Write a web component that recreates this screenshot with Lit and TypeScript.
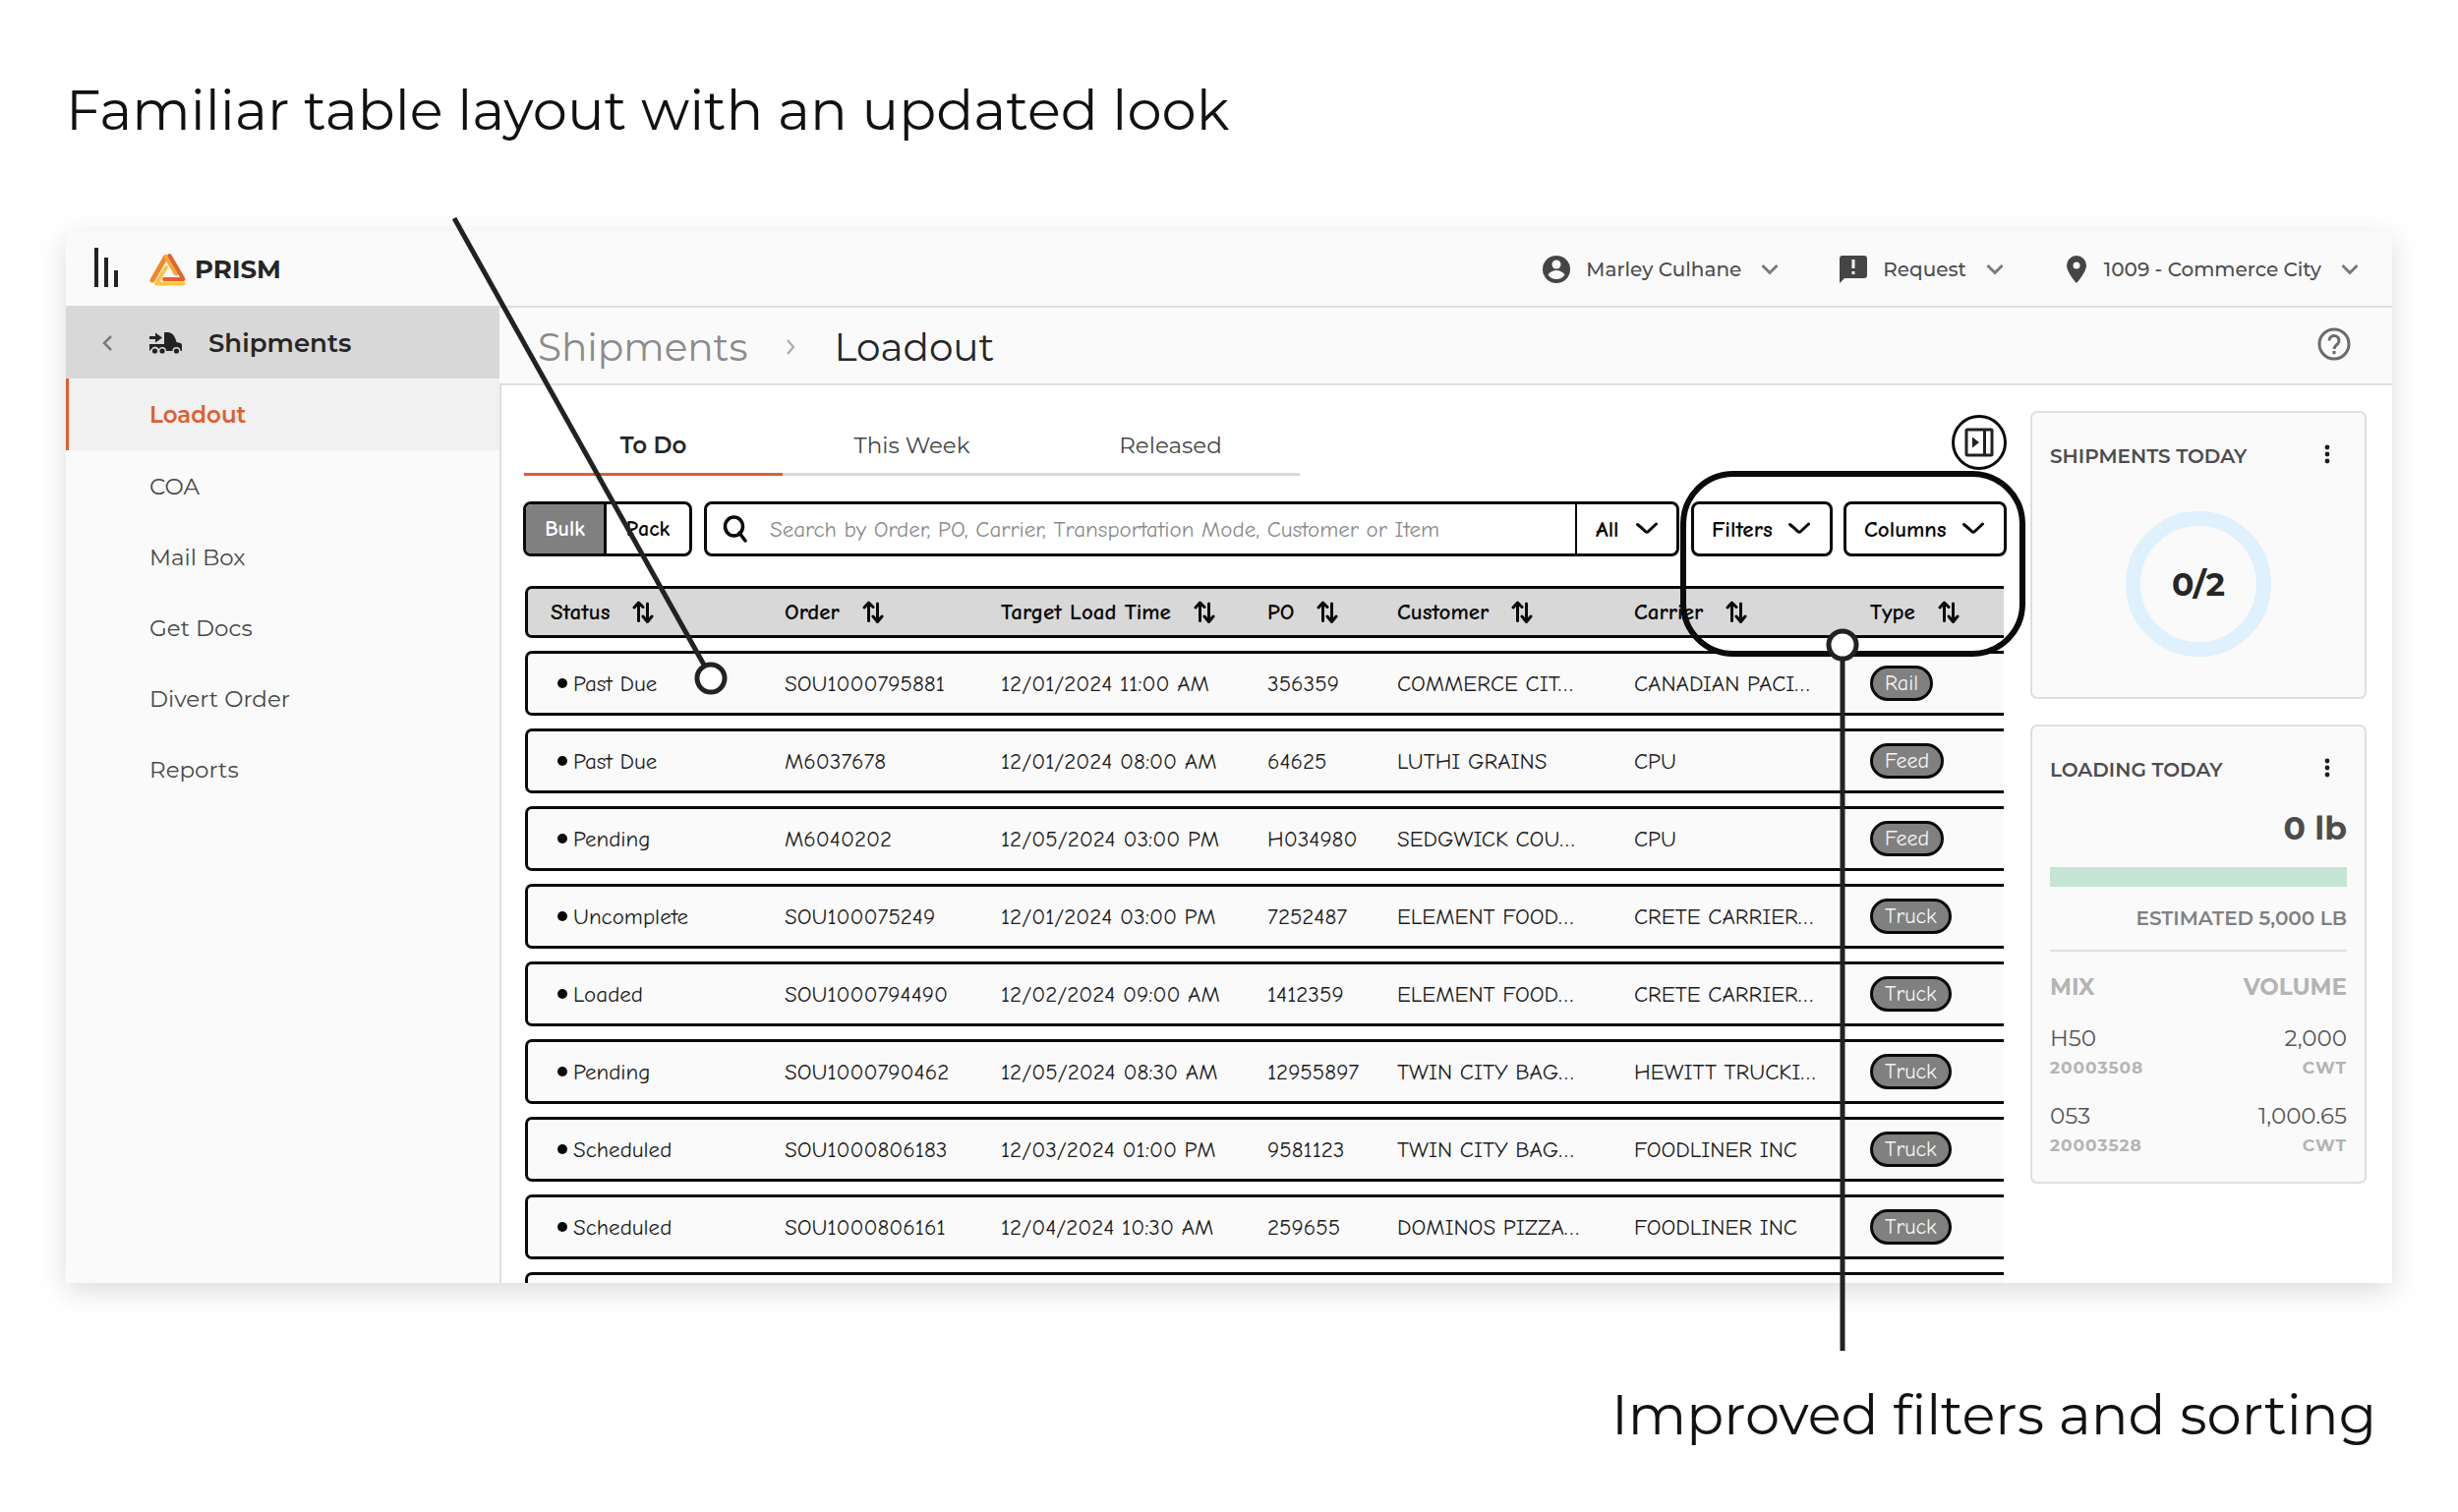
import { LitElement, html, css } from "lit";
import { customElement } from "lit/decorators.js";

const COLUMNS = [
  { label: "Status", width: 264 },
  { label: "Order", width: 220 },
  { label: "Target Load Time", width: 271 },
  { label: "PO", width: 132 },
  { label: "Customer", width: 241 },
  { label: "Carrier", width: 240 },
  { label: "Type", width: 136 },
];

const ROWS = [
  ["Past Due", "SOU1000795881", "12/01/2024 11:00 AM", "356359", "COMMERCE CIT…", "CANADIAN PACI…", "Rail"],
  ["Past Due", "M6037678", "12/01/2024 08:00 AM", "64625", "LUTHI GRAINS", "CPU", "Feed"],
  ["Pending", "M6040202", "12/05/2024 03:00 PM", "H034980", "SEDGWICK COU…", "CPU", "Feed"],
  ["Uncomplete", "SOU100075249", "12/01/2024 03:00 PM", "7252487", "ELEMENT FOOD…", "CRETE CARRIER…", "Truck"],
  ["Loaded", "SOU1000794490", "12/02/2024 09:00 AM", "1412359", "ELEMENT FOOD…", "CRETE CARRIER…", "Truck"],
  ["Pending", "SOU1000790462", "12/05/2024 08:30 AM", "12955897", "TWIN CITY BAG…", "HEWITT TRUCKI…", "Truck"],
  ["Scheduled", "SOU1000806183", "12/03/2024 01:00 PM", "9581123", "TWIN CITY BAG…", "FOODLINER INC", "Truck"],
  ["Scheduled", "SOU1000806161", "12/04/2024 10:30 AM", "259655", "DOMINOS PIZZA…", "FOODLINER INC", "Truck"],
];

const MIX = [
  { name: "H50", code: "20003508", volume: "2,000" },
  { name: "053", code: "20003528", volume: "1,000.65" },
];

const NAV = ["Loadout", "COA", "Mail Box", "Get Docs", "Divert Order", "Reports"];

const chevron = html`<svg class="chev" width="18" height="12" viewBox="0 0 18 12" aria-hidden="true">
  <path d="M1.500 2l7.500 7.500L16.500 2" /></svg>`;
const boldChevron = html`<svg class="chev bold" width="24" height="14" viewBox="0 0 24 14" aria-hidden="true">
  <path d="M2.500 2.500C5 4.500 8 7 10.500 9.500Q12 11 13.500 9.500C16 7 19 4.500 21.500 2" /></svg>`;
const sortIcon = html`<svg class="sort" width="22" height="24" viewBox="0 0 22 24" aria-hidden="true">
  <path d="M6.500 20.500V2.500M2 7L6.500 2l4.500 4.500M15.500 3v18M11 16l4.500 5.500L20 16" /></svg>`;
const kebab = html`<svg width="6" height="20" viewBox="0 0 6 20" aria-hidden="true">
  <circle cx="3" cy="3" r="2.400" /><circle cx="3" cy="10" r="2.400" /><circle cx="3" cy="17" r="2.400" /></svg>`;

@customElement("app-root")
export class AppRoot extends LitElement {
  static styles = css`
    :host {
      display: block;
      --sans: Montserrat, Inter, "Open Sans", sans-serif;
      --hand: "Comic Neue", Lato, "Open Sans", sans-serif;
      font-family: var(--sans);
      color: #262626;
      background: #fff;
    }
    * { box-sizing: border-box; }
    button, input, select { font: inherit; color: inherit; margin: 0; padding: 0; border: 0; background: none; }
    a { color: inherit; text-decoration: none; }
    .stage { display: flex; flex-direction: column; padding: 72px 67px; min-height: 100vh; }
    .caption { margin: 0; font-size: 56px; line-height: 80px; font-weight: 400; color: #111; }
    .caption.end { text-align: right; padding-right: 16px; margin-top: 94px; }
    .panel { position: relative; margin-top: 83px; background: #fff; box-shadow: 0 8px 28px rgba(0, 0, 0, 0.14); }

    .topbar { display: flex; align-items: center; height: 76px; background: #fafafa; padding: 1px 34px 0 29px; }
    .brand { display: flex; align-items: center; gap: 8px; margin-left: 31px; font-size: 26px; font-weight: 700; }
    .spacer { flex: 1; }
    .account { display: flex; align-items: center; font-size: 20px; font-weight: 500; color: #4d4d4d; margin-left: 62px; }
    .account .label { margin: 0 20px 0 16px; }
    .chev { fill: none; stroke: #7a7a7a; stroke-width: 3; }
    .chev.bold { stroke: #0a0a0a; stroke-width: 3; stroke-linecap: round; stroke-linejoin: round; }

    .body { display: grid; grid-template-columns: 441px 1fr; }
    .side { background: #fafafa; }
    .side-title { display: flex; align-items: center; width: 100%; height: 74px; padding: 1px 0 0 36px; background: #d8d8d8; font-size: 26px; font-weight: 600; }
    .side-title .truck { margin: 0 27px 0 37px; }
    .nav { display: flex; flex-direction: column; }
    .nav a { height: 72px; line-height: 74px; padding-left: 85px; font-size: 23px; color: #484848; }
    .nav a.on { height: 73px; padding-left: 82px; border-left: 3px solid #dd5f35; background: #f1f1f1; color: #dd5f35; font-weight: 600; }

    .crumbs { display: flex; align-items: center; height: 81px; padding: 2px 42px 0 39px; background: #fafafa; border-top: 2px solid #dfdfdf; border-bottom: 2px solid #dfdfdf; font-size: 39px; }
    .crumbs .parent { color: #8b8b8b; }
    .crumbs .sep { margin: 0 39px; }
    .content { display: grid; grid-template-columns: 1fr 342px; gap: 24px; padding: 0 26px 0 22px; border-left: 2px solid #dfdfdf; height: 913px; overflow: hidden; }
    .main { padding-top: 30px; min-width: 0; }
    .tab-row { display: flex; justify-content: space-between; align-items: flex-start; padding-left: 1px; }
    .tabs { display: grid; grid-template-columns: repeat(3, 263px); }
    .tab { height: 62px; padding-top: 2px; font-size: 23px; border-bottom: 3px solid #d8d8d8; color: #484848; }
    .tab.on { border-color: #dd5f35; color: #262626; font-weight: 600; }
    .round { display: grid; place-items: center; width: 56px; height: 56px; border: 3px solid #0a0a0a; border-radius: 50%; }

    .controls { display: flex; gap: 12px; height: 56px; margin-top: 26px; font-family: var(--hand); font-size: 23px; font-weight: 700; color: #0a0a0a; }
    .box { display: flex; border: 3px solid #0a0a0a; border-radius: 8px; background: #fff; }
    .toggle { width: 172px; overflow: hidden; font-size: 22px; }
    .toggle button { flex: 1; }
    .toggle .on { flex: none; width: 82px; background: #808080; color: #fff; border-right: 3px solid #0a0a0a; }
    .search { flex: 1; align-items: center; }
    .search .glass { margin: 0 22px 0 16px; }
    .search input { flex: 1; height: 100%; min-width: 0; font-weight: 400; outline: 0; }
    .search input::placeholder { color: #8b8b8b; opacity: 1; }
    .scope { position: relative; display: flex; align-items: center; width: 103px; height: 100%; border-left: 2px solid #0a0a0a; }
    .scope select { appearance: none; width: 100%; height: 100%; padding-left: 19px; }
    .scope .chev { position: absolute; right: 18px; pointer-events: none; }
    .filters { position: relative; display: flex; gap: 11px; }
    .filters .box { align-items: center; justify-content: space-between; padding: 0 19px 0 18px; }
    .filters .filter { width: 144px; }
    .filters .columns { width: 166px; }

    .table-wrap { margin-top: 17px; padding: 0 3px 0 2px; }
    .orders { width: 100%; table-layout: fixed; border-collapse: separate; border-spacing: 0 13px; font-family: var(--hand); font-size: 23px; font-weight: 400; text-align: left; color: #1c1c1c; }
    .orders th, .orders td { padding: 0; border: 3px solid #0a0a0a; border-width: 3px 0; white-space: nowrap; }
    .orders th { height: 53px; background: #d8d8d8; }
    .orders td { height: 66px; background: #fafafa; }
    .orders th:first-child, .orders td:first-child { border-left-width: 3px; border-radius: 7px 0 0 7px; padding-left: 23px; }
    .sorter { display: flex; align-items: center; gap: 23px; font-weight: 700; color: #0a0a0a; }
    .sort { fill: none; stroke: #0a0a0a; stroke-width: 3; stroke-linecap: round; stroke-linejoin: round; }
    .status { display: flex; align-items: center; gap: 6px; padding-left: 7px; }
    .dot { width: 10px; height: 10px; border-radius: 50%; background: #0a0a0a; }
    .chip { display: inline-flex; align-items: center; vertical-align: middle; height: 36px; padding: 0 12px; border: 3px solid #0a0a0a; border-radius: 18px; background: #808080; color: #f4f4f4; font-size: 22px; }

    .cards { display: flex; flex-direction: column; gap: 26px; padding-top: 26px; }
    .card { border: 2px solid #dfdfdf; border-radius: 7px; background: #fafafa; padding: 24px 18px 22px; }
    .card h2 { margin: 0; font-size: 20px; font-weight: 600; color: #4d4d4d; }
    .card-head { display: flex; justify-content: space-between; align-items: center; height: 40px; }
    .card-head button { width: 40px; height: 40px; }
    .card-head svg { fill: #1c1c1c; }
    .ring { display: grid; place-items: center; width: 148px; height: 148px; margin: 36px auto 19px; border: 15px solid #def1fd; border-radius: 50%; font-size: 33px; font-weight: 700; }
    .total { margin-top: 15px; text-align: right; font-size: 33px; line-height: 48px; font-weight: 700; color: #4d4d4d; }
    .bar { height: 20px; margin-top: 16px; background: #c4e5d4; }
    .estimate { margin-top: 20px; padding-bottom: 20px; border-bottom: 2px solid #dfdfdf; text-align: right; font-size: 20px; line-height: 24px; font-weight: 600; color: #808080; }
    .mix { width: 100%; margin-top: 24px; border-collapse: collapse; color: #565656; font-size: 23px; line-height: 30px; }
    .mix th { padding: 0; text-align: left; line-height: 24px; font-weight: 700; color: #b4b4b4; }
    .mix td { padding: 25px 0 0; }
    .mix tr + tr td { padding-top: 19px; }
    .mix th:last-child, .mix td:last-child { text-align: right; }
    .mix small { display: block; font-size: 17px; font-weight: 700; letter-spacing: 1px; color: #b4b4b4; }

    .pointer { position: absolute; pointer-events: none; fill: #fff; stroke: #222; stroke-width: 5; }
    .pointer.to-table { left: 390px; top: -15px; }
    .pointer.to-filters { right: 542px; top: 404px; }
    .halo { position: absolute; inset: -31px -19px -102px -11px; border: 6px solid #0a0a0a; border-radius: 54px; pointer-events: none; }
  `;

  render() {
    return html`<div class="stage">
      <h1 class="caption">Familiar table layout with an updated look</h1>
      <section class="panel">
        ${this.topbar()}
        <div class="body">
          ${this.sidebar()}
          <div>
            <nav class="crumbs" aria-label="Breadcrumb">
              <a class="parent" href="#">Shipments</a>
              <svg class="sep" width="10" height="16" viewBox="0 0 10 16" fill="none" stroke="#a8a8a8" stroke-width="2" aria-hidden="true"><path d="M2 1l6 7-6 7" /></svg>
              <span>Loadout</span>
              <span class="spacer"></span>
              <button aria-label="Help"><svg width="34" height="34" viewBox="0 0 34 34" fill="none" stroke="#6b6b6b" stroke-width="3" aria-hidden="true">
                <circle cx="17" cy="17" r="15" /><path d="M12 13.500a5 5 0 1 1 8.500 3.500c-2 1.700-3.500 2.500-3.500 5" /><path d="M17 24v3.200" /></svg></button>
            </nav>
            <div class="content">${this.main()}${this.cards()}</div>
          </div>
        </div>
        <svg class="pointer to-table" width="290" height="500" viewBox="0 0 290 500" aria-hidden="true">
          <path d="M5 2L260 458" /><circle cx="266" cy="470" r="14" />
        </svg>
        <svg class="pointer to-filters" width="34" height="740" viewBox="0 0 34 740" aria-hidden="true">
          <path d="M17 32V735" /><circle cx="17" cy="17" r="14" />
        </svg>
      </section>
      <h2 class="caption end">Improved filters and sorting</h2>
    </div>`;
  }

  private topbar() {
    return html`<header class="topbar">
      <button aria-label="Menu"><svg width="25" height="40" viewBox="0 0 25 40" fill="#222" aria-hidden="true">
        <path d="M0 0h4v40H0zM10 10h4v30h-4zM20 23h4v17h-4z" /></svg></button>
      <div class="brand">
        <svg width="38" height="34" viewBox="0 0 38 34" fill="none" stroke-width="4" stroke-linecap="round" stroke-linejoin="round" aria-hidden="true">
          <path d="M3 28L16.500 4.500" stroke="#f0872c" stroke-width="5" />
          <path d="M17.500 4.500L27 21" stroke="#f7a63b" stroke-width="5" />
          <path d="M20.500 3L34.500 27H15" stroke="#e8602c" stroke-width="4" />
          <path d="M17 15L7 31.500H34.500" stroke="#fcc53f" />
        </svg>
        <span>PRISM</span>
      </div>
      <span class="spacer"></span>
      <button class="account">
        <svg width="28" height="28" viewBox="0 0 28 28" aria-hidden="true"><circle cx="14" cy="14" r="14" fill="#454545" /><circle cx="14" cy="9" r="4.500" fill="#fafafa" /><path d="M5.500 19.500c2-3 5-4.500 8.500-4.500s6.500 1.500 8.500 4.500c-2 3-5 4.500-8.500 4.500s-6.500-1.500-8.500-4.500z" fill="#fafafa" /></svg>
        <span class="label">Marley Culhane</span>${chevron}
      </button>
      <button class="account">
        <svg width="28" height="28" viewBox="0 0 28 28" aria-hidden="true"><path d="M3 0h22a3 3 0 0 1 3 3v17a3 3 0 0 1-3 3H5l-5 5V3a3 3 0 0 1 3-3z" fill="#454545" /><path d="M14 4v9M14 16v3" stroke="#fafafa" stroke-width="3" /></svg>
        <span class="label">Request</span>${chevron}
      </button>
      <button class="account">
        <svg width="24" height="28" viewBox="-2 0 24 28" aria-hidden="true"><path d="M10 0a10 10 0 0 1 10 10c0 7-10 18-10 18S0 17 0 10A10 10 0 0 1 10 0zm0 6.500a3.500 3.500 0 1 0 0 7 3.500 3.500 0 0 0 0-7z" fill="#454545" /></svg>
        <span class="label">1009 - Commerce City</span>${chevron}
      </button>
    </header>`;
  }

  private sidebar() {
    return html`<aside class="side">
      <button class="side-title">
        <svg width="12" height="18" viewBox="0 0 12 18" fill="none" stroke="#7a7a7a" stroke-width="2.500" aria-hidden="true"><path d="M10 2L3 9l7 7" /></svg>
        <svg class="truck" width="33" height="22" viewBox="0 0 33 22" fill="#222" aria-hidden="true">
          <path d="M0 4h6V.5l7 5-7 5V7H0z" />
          <path d="M16 0h2.500c4.500 0 7.500 3.500 9 10l4 1q1.500.5 1.500 2v6h-1.500a4 4 0 0 0-8 0h-6.500a4 4 0 0 0-7.500-2 4 4 0 0 0-7.500 0L0 19v-7h15V1q0-1 1-1z" />
          <circle cx="5.500" cy="19" r="2.600" /><circle cx="13" cy="19" r="2.600" /><circle cx="27.500" cy="19" r="2.600" />
        </svg>
        <span>Shipments</span>
      </button>
      <nav class="nav" aria-label="Shipments">
        ${NAV.map((item, i) => html`<a href="#" class=${i === 0 ? "on" : ""}>${item}</a>`)}
      </nav>
    </aside>`;
  }

  private main() {
    return html`<div class="main">
      <div class="tab-row">
        <div class="tabs" role="tablist">
          ${["To Do", "This Week", "Released"].map((t, i) => html`<button role="tab" aria-selected=${i === 0} class="tab ${i === 0 ? "on" : ""}">${t}</button>`)}
        </div>
        <button class="round" aria-label="Collapse panel"><svg width="30" height="30" viewBox="0 0 30 30" fill="none" stroke="#222" stroke-width="3" aria-hidden="true">
          <rect x="2" y="2" width="26" height="26" rx="1" /><path d="M20.500 2v26" /><path d="M8 9.500l7 5.500-7 5.500z" fill="#222" stroke="none" /></svg></button>
      </div>
      <div class="controls">
        <div class="box toggle"><button class="on">Bulk</button><button>Pack</button></div>
        <div class="box search">
          <svg class="glass" width="26" height="28" viewBox="0 0 26 28" fill="none" stroke="#0a0a0a" stroke-width="3.500" stroke-linecap="round" aria-hidden="true"><ellipse cx="11.500" cy="11.500" rx="9" ry="9.500" /><path d="M17 18l6 8" /></svg>
          <input type="search" aria-label="Search orders" placeholder="Search by Order, PO, Carrier, Transportation Mode, Customer or Item" />
          <div class="scope"><select aria-label="Search scope"><option>All</option></select>${boldChevron}</div>
        </div>
        <div class="filters">
          <button class="box filter">Filters ${boldChevron}</button>
          <button class="box columns">Columns ${boldChevron}</button>
          <div class="halo"></div>
        </div>
      </div>
      <div class="table-wrap"><table class="orders">
        <colgroup>${COLUMNS.map((c) => html`<col style="width:${c.width}px" />`)}</colgroup>
        <thead><tr>${COLUMNS.map((c) => html`<th scope="col"><button class="sorter">${c.label}${sortIcon}</button></th>`)}</tr></thead>
        <tbody>
          ${ROWS.map((r) => html`<tr>
            <td><span class="status"><span class="dot"></span>${r[0]}</span></td>
            ${r.slice(1, 6).map((v) => html`<td>${v}</td>`)}
            <td><span class="chip">${r[6]}</span></td>
          </tr>`)}
          <tr>${COLUMNS.map(() => html`<td></td>`)}</tr>
        </tbody>
      </table></div>
    </div>`;
  }

  private cards() {
    return html`<div class="cards">
      <section class="card">
        <div class="card-head"><h2>SHIPMENTS TODAY</h2><button aria-label="Shipments options">${kebab}</button></div>
        <div class="ring">0/2</div>
      </section>
      <section class="card">
        <div class="card-head"><h2>LOADING TODAY</h2><button aria-label="Loading options">${kebab}</button></div>
        <div class="total">0 lb</div>
        <div class="bar"></div>
        <div class="estimate">ESTIMATED 5,000 LB</div>
        <table class="mix">
          <thead><tr><th scope="col">MIX</th><th scope="col">VOLUME</th></tr></thead>
          <tbody>${MIX.map((m) => html`<tr><td>${m.name}<small>${m.code}</small></td><td>${m.volume}<small>CWT</small></td></tr>`)}</tbody>
        </table>
      </section>
    </div>`;
  }
}
